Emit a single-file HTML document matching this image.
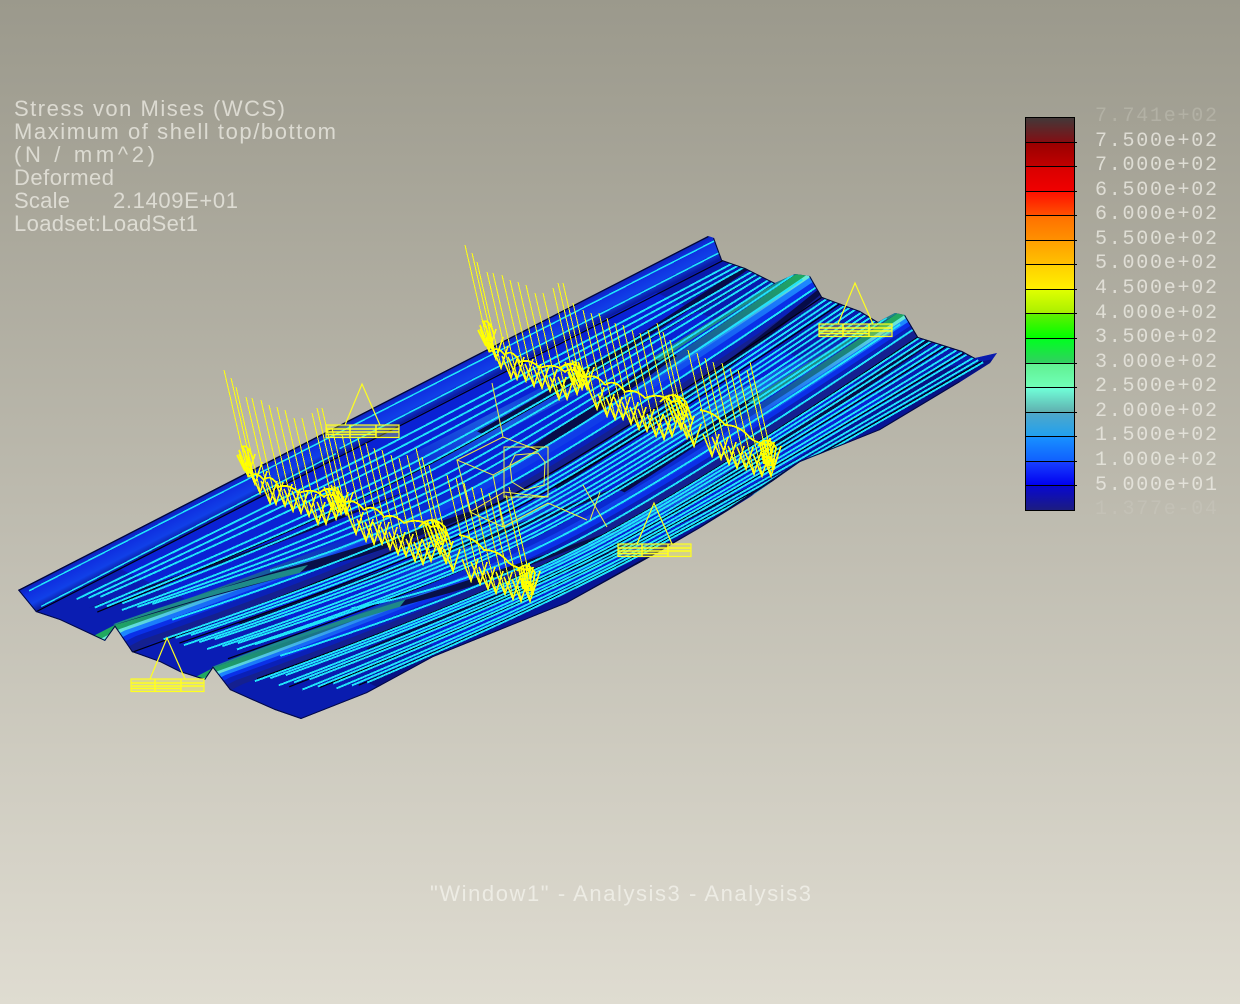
<!DOCTYPE html>
<html lang="en"><head><meta charset="utf-8"><title>Stress von Mises</title>
<style>
html,body{margin:0;padding:0;width:1240px;height:1004px;overflow:hidden}
svg{display:block}
.n{vector-effect:non-scaling-stroke;fill:none}
.t{font-family:"Liberation Sans",sans-serif;font-size:22px;fill:#ecebe3;fill-opacity:.78}
.m{font-family:"Liberation Mono",monospace;font-size:20px;fill:#ecebe3}
</style></head><body>
<svg width="1240" height="1004" viewBox="0 0 1240 1004" xmlns="http://www.w3.org/2000/svg">
<defs>
<linearGradient id="bg" x1="0" y1="0" x2="0" y2="1"><stop offset="0" stop-color="#9b998c"/><stop offset="1" stop-color="#dfdcd1"/></linearGradient>
<linearGradient id="bar" x1="0" y1="117" x2="0" y2="510" gradientUnits="userSpaceOnUse">
<stop offset="0" stop-color="#403a3a"/><stop offset=".062" stop-color="#801015"/><stop offset=".064" stop-color="#980000"/><stop offset=".125" stop-color="#c00000"/><stop offset=".127" stop-color="#d80000"/><stop offset=".188" stop-color="#f00000"/><stop offset=".19" stop-color="#ff1000"/><stop offset=".25" stop-color="#ff5000"/><stop offset=".252" stop-color="#ff7000"/><stop offset=".313" stop-color="#ff9000"/><stop offset=".315" stop-color="#ffa000"/><stop offset=".375" stop-color="#ffc000"/><stop offset=".377" stop-color="#ffd000"/><stop offset=".438" stop-color="#fff000"/><stop offset=".44" stop-color="#e0ff00"/><stop offset=".5" stop-color="#a8f000"/><stop offset=".502" stop-color="#60f000"/><stop offset=".562" stop-color="#00ff00"/><stop offset=".564" stop-color="#00ff20"/><stop offset=".625" stop-color="#30d060"/><stop offset=".627" stop-color="#60f090"/><stop offset=".688" stop-color="#70ffb8"/><stop offset=".69" stop-color="#70ffd8"/><stop offset=".75" stop-color="#60b0b0"/><stop offset=".752" stop-color="#50a8c8"/><stop offset=".813" stop-color="#20a0f0"/><stop offset=".815" stop-color="#1890ff"/><stop offset=".875" stop-color="#1060ff"/><stop offset=".877" stop-color="#1840ff"/><stop offset=".937" stop-color="#0000f0"/><stop offset=".939" stop-color="#0808d0"/><stop offset="1" stop-color="#1c1c80"/>
</linearGradient>
<linearGradient id="g1" x1="0" y1="0" x2="0" y2="1"><stop offset="0" stop-color="#050a40"/><stop offset=".12" stop-color="#0a1aa0"/><stop offset=".45" stop-color="#0f2fe0"/><stop offset=".75" stop-color="#1040e8"/><stop offset="1" stop-color="#0a1898"/></linearGradient>
<linearGradient id="hlG" gradientUnits="userSpaceOnUse" x1="0" y1="0" x2="1000" y2="0"><stop offset="0" stop-color="#20a860"/><stop offset=".16" stop-color="#1a6a90"/><stop offset=".3" stop-color="#0a2ad0"/><stop offset=".72" stop-color="#0a2ad0"/><stop offset=".86" stop-color="#1a6a90"/><stop offset="1" stop-color="#20a860"/></linearGradient>
<linearGradient id="hlC" gradientUnits="userSpaceOnUse" x1="0" y1="0" x2="1000" y2="0"><stop offset="0" stop-color="#68e8d8"/><stop offset=".18" stop-color="#2a90f0"/><stop offset=".35" stop-color="#1040e8"/><stop offset=".72" stop-color="#1040e8"/><stop offset=".86" stop-color="#2a90f0"/><stop offset="1" stop-color="#68e8d8"/></linearGradient>
<linearGradient id="hlB" gradientUnits="userSpaceOnUse" x1="0" y1="0" x2="1000" y2="0"><stop offset="0" stop-color="#1c88ff"/><stop offset=".3" stop-color="#0f3ce8"/><stop offset=".72" stop-color="#0f3ce8"/><stop offset="1" stop-color="#1c88ff"/></linearGradient>
<linearGradient id="glow" x1="0" y1="0" x2="1" y2="0"><stop offset="0" stop-color="#30a8f0" stop-opacity="0"/><stop offset=".5" stop-color="#30a8f0" stop-opacity=".8"/><stop offset="1" stop-color="#30a8f0" stop-opacity="0"/></linearGradient>
<clipPath id="cl"><path d="M18 590L708 236L714 238L722 260L745 268L775 283L795 274L810 276L822 297L860 311L878 322L895 313L905 315L918 337L962 351L975 358L997 353L990 363L960 382L880 430L800 462L750 497L700 528L650 557L567 603L433 657L367 693L301 719L275 710L250 699L230 690L213 668L205 680L180 672L160 662L132 652L115 627L105 641L60 620L36 612Z"/></clipPath>
<path id="cA" d="M-60 306L13 306Q300 450 450 450Q600 450 1010 303L1100 303" fill="none"/>
<path id="cB" d="M-60 648L16 648Q300 780 450 780Q600 780 1020 637L1100 637" fill="none"/>
<g id="a" fill="none" stroke="#ffff10"><path d="M0 0L24 104" stroke-width="1"/><path d="M15 84L24 106L31 84" stroke-width="1.6"/></g>
<g id="row">
<use href="#a" x="465" y="245"/><use href="#a" x="472" y="253"/><use href="#a" x="477" y="262"/><use href="#a" x="487" y="272"/><use href="#a" x="493" y="273"/><use href="#a" x="502" y="275"/><use href="#a" x="510" y="280"/><use href="#a" x="518" y="282"/><use href="#a" x="526" y="285"/><use href="#a" x="535" y="293"/><use href="#a" x="543" y="293"/><use href="#a" x="553" y="288"/><use href="#a" x="558" y="283"/><use href="#a" x="563" y="283"/><use href="#a" x="573" y="303"/><use href="#a" x="583" y="310"/><use href="#a" x="591" y="313"/><use href="#a" x="599" y="313"/><use href="#a" x="607" y="318"/><use href="#a" x="615" y="323"/><use href="#a" x="623" y="325"/><use href="#a" x="632" y="330"/><use href="#a" x="640" y="333"/><use href="#a" x="648" y="330"/><use href="#a" x="657" y="323"/><use href="#a" x="663" y="332"/><use href="#a" x="670" y="340"/><use href="#a" x="688" y="350"/><use href="#a" x="697" y="353"/><use href="#a" x="705" y="358"/><use href="#a" x="713" y="362"/><use href="#a" x="722" y="363"/><use href="#a" x="730" y="368"/><use href="#a" x="738" y="370"/><use href="#a" x="747" y="370"/><use href="#a" x="750" y="362"/>
<path d="M480 325L490 352M484 322L494 350M478 330L486 346M488 322L492 345M482 322Q490 318 494 335M486 326L490 348M490 352Q497 345 505 355Q512 348 520 362Q530 358 540 368Q555 362 565 372Q572 365 585 378Q595 372 605 385M560 368Q572 358 584 372L590 392M565 362L575 385M572 360L582 385M578 362L586 380M569 364L579 388M575 361L584 384M605 385Q615 378 625 392Q635 388 645 398Q660 392 672 402Q680 398 690 412M660 402Q672 388 686 402L692 420M665 396L675 422M672 394L682 420M678 396L688 418M668 396L678 420M675 394L685 418M700 410Q715 412 725 425Q740 425 750 438Q760 445 772 445M758 446Q768 434 776 448L772 470M764 440L768 468M770 438L772 466M760 444L764 464M774 442L770 462M767 440L770 466M762 442L766 466" fill="none" stroke="#ffff00" stroke-width="1.8"/>
</g>
<g id="ic" fill="none" stroke="#ffff20" stroke-width="1.2">
<path d="M19 0L36 -41L54 0"/>
<rect x="0" y="0" width="73" height="12.5" fill="#ffff30" fill-opacity=".3"/>
<path d="M0 4H73M0 7H73M0 9.5H50M24 0V12M50 0V12" stroke-width="1.5"/>
</g>
</defs>
<rect width="1240" height="1004" fill="url(#bg)"/>

<g clip-path="url(#cl)">
<rect width="1240" height="1004" fill="#0a22d4"/>
<g transform="matrix(.688 -.354 .281 .129 20 590)">
<!-- shading of flats -->
<rect x="880" y="100" width="260" height="1000" fill="#081488" opacity=".5"/>
<rect x="-60" y="110" width="160" height="230" fill="#0a1890" opacity=".5"/>
<rect x="-60" y="440" width="200" height="240" fill="#0a1890" opacity=".45"/>
<rect x="-60" y="760" width="260" height="280" fill="#0a1890" opacity=".55"/>
<path d="M100 990Q350 1020 450 1020Q600 1020 960 920L1100 1100L100 1100Z" fill="#050a60" opacity=".55"/>
<!-- soft glows -->
<rect x="220" y="55" width="440" height="50" fill="url(#glow)"/>
<rect x="430" y="240" width="300" height="90" fill="url(#glow)" opacity=".55"/>
<rect x="620" y="620" width="340" height="70" fill="url(#glow)" opacity=".7"/>
<rect x="300" y="860" width="420" height="60" fill="url(#glow)" opacity=".7"/>
<rect x="230" y="650" width="320" height="60" fill="url(#glow)" opacity=".4"/>
<!-- rib 1 -->
<rect x="-60" y="-40" width="1180" height="150" fill="url(#g1)"/>
<!-- rib A face -->
<g stroke-linecap="butt">
<use href="#cA" transform="translate(0 118)" stroke="#142090" stroke-width="34"/>
<use href="#cA" transform="translate(0 90)" stroke="#0a20b8" stroke-width="30"/>
<use href="#cA" transform="translate(0 68)" stroke="#0a30e8" stroke-width="24"/>
<use href="#cA" transform="translate(0 48)" stroke="url(#hlB)" stroke-width="22"/>
<use href="#cA" transform="translate(0 30)" stroke="url(#hlC)" stroke-width="18"/>
<use href="#cA" transform="translate(0 12)" stroke="url(#hlG)" stroke-width="24"/>
<!-- rib B face -->
<use href="#cB" transform="translate(0 100)" stroke="#142090" stroke-width="30"/>
<use href="#cB" transform="translate(0 76)" stroke="#0a20b8" stroke-width="24"/>
<use href="#cB" transform="translate(0 56)" stroke="#0a30e8" stroke-width="20"/>
<use href="#cB" transform="translate(0 40)" stroke="url(#hlB)" stroke-width="18"/>
<use href="#cB" transform="translate(0 25)" stroke="url(#hlC)" stroke-width="16"/>
<use href="#cB" transform="translate(0 10)" stroke="url(#hlG)" stroke-width="20"/>
</g>
<!-- dark lens wedges -->
<path d="M20 195Q100 240 190 289Q300 340 420 370Q300 318 180 272Q100 225 20 195Z" fill="#070c48"/>
<path d="M13 306Q150 400 282 518Q350 560 480 590Q350 520 240 440Q120 350 13 306Z" fill="#081048"/>
<path d="M16 648Q150 700 290 819Q380 880 520 910Q380 845 270 775Q150 690 16 648Z" fill="#081048"/>
<path d="M100 545Q250 610 400 700Q480 745 600 760Q480 715 390 670Q250 590 100 530Z" fill="#070c48"/>
<path d="M150 880Q300 920 450 985Q560 1010 700 1000Q560 985 450 960Q300 900 150 865Z" fill="#070c48"/>
<path d="M520 640Q700 600 1000 420L1000 400Q700 570 520 620Z" fill="#070c48"/>
<path d="M550 300Q750 290 1000 190L1000 170Q750 260 550 280Z" fill="#070c48"/>
<path d="M560 960Q760 900 1000 810L1000 785Q760 870 560 935Z" fill="#070c48"/>
<path d="M560 780Q640 760 800 700L800 665Q640 720 560 750Z" fill="#070c48"/>
<path d="M560 470Q640 450 800 380L800 345Q640 410 560 440Z" fill="#070c48"/>
<!-- teal backs -->
<path d="M13 306Q120 370 217 464L235 450Q130 350 13 300Z" fill="#1f8a88"/>
<path d="M16 648Q120 690 235 776L250 760Q130 680 16 642Z" fill="#1f8a88"/>
<path d="M1010 303Q900 325 780 365L780 340Q900 305 1010 296Z" fill="#1f8a88"/>
<path d="M1020 637Q900 665 780 705L780 680Q900 640 1020 630Z" fill="#1f8a88"/>
<!-- black lines -->
<path class="n" stroke="#000010" stroke-width="1.2" d="M-20 110L1010 118M20 226Q300 311 450 311Q600 311 1000 229M-20 437Q300 580 450 580Q600 580 1000 433M30 494Q300 634 450 634Q600 634 1000 492M40 642Q300 774 450 774Q600 774 1000 633M30 770Q300 896 450 896Q600 896 1000 762M40 860Q300 955 450 955Q600 955 1000 851M60 920Q300 993 450 993Q600 993 1000 910M90 985Q300 1034 450 1034Q600 1034 1000 973"/>
<!-- cyan lines -->
<g shape-rendering="crispEdges">
<path class="n" stroke="#1fe4fa" stroke-width="1.5" d="M5 20L1000 30M-10 100L420 96M430 84L1000 82"/>
<path class="n" stroke="#1fe4fa" stroke-width="1.9" d="M25 140Q300 162 450 162Q600 162 1000 145M35 158Q300 193 450 193Q600 193 1000 163M45 176Q300 225 450 225Q600 225 1000 180M25 205Q300 275 450 275Q600 275 1000 209M35 223Q300 306 450 306Q600 306 1000 227M50 241Q300 337 450 337Q600 337 1000 244M40 265Q300 379 450 379Q600 379 1000 268M55 283Q300 410 450 410Q600 410 1000 285M70 300Q300 440 450 440Q600 440 1000 302"/>
<path class="n" stroke="#1fe4fa" stroke-width="1.9" d="M200 400Q300 479 450 479Q600 479 1000 336M60 395Q300 533 450 533Q600 533 1000 390M25 450Q300 592 450 592Q600 592 1000 449M35 468Q300 609 450 609Q600 609 1000 467M50 486Q300 626 450 626Q600 626 1000 484M30 510Q300 649 450 649Q600 649 1000 508M45 528Q300 666 450 666Q600 666 1000 525M60 546Q300 683 450 683Q600 683 1000 543M40 568Q300 704 450 704Q600 704 1000 565M55 586Q300 721 450 721Q600 721 1000 582M70 604Q300 738 450 738Q600 738 1000 600M60 625Q300 758 450 758Q600 758 1000 620M80 640Q300 772 450 772Q600 772 1000 635"/>
<path class="n" stroke="#1fe4fa" stroke-width="1.9" d="M80 730Q300 866 450 866Q600 866 1000 728M200 690Q300 821 450 821Q600 821 1000 684M25 775Q300 900 450 900Q600 900 1000 767M40 793Q300 911 450 911Q600 911 1000 785M55 811Q300 923 450 923Q600 923 1000 803M35 835Q300 938 450 938Q600 938 1000 826M50 853Q300 950 450 950Q600 950 1000 844M65 871Q300 962 450 962Q600 962 1000 862M45 895Q300 977 450 977Q600 977 1000 885M60 913Q300 989 450 989Q600 989 1000 903M75 931Q300 1000 450 1000Q600 1000 1000 920M70 955Q300 1016 450 1016Q600 1016 1000 944M85 973Q300 1028 450 1028Q600 1028 1000 962M100 991Q300 1039 450 1039Q600 1039 1000 979"/>
</g>
</g>
<path d="M18 590L708 236" stroke="#040830" stroke-width="2.5" fill="none"/>
<path d="M714 238L722 260L745 268L775 283M810 276L822 297L860 311L878 322M905 315L918 337L962 351L975 358" stroke="#050a30" stroke-width="2" fill="none"/>
<path d="M18 590L36 612L60 620L105 641L115 627L132 652L160 662L180 672L205 680L213 668L230 690L250 699L275 710L301 719" stroke="#040a40" stroke-width="2" fill="none"/>
<path d="M433 657L367 693L301 719M960 382L880 430L800 462L700 528L567 603L433 657" stroke="#050a40" stroke-width="2" fill="none"/>
</g>

<g fill="none" stroke="#f0f040" stroke-width="1">
<path d="M492 383L503 437L457 460L493 475L538 450L503 437M457 460L470 512L503 527L548 503L587 520M493 475L503 527M504 447H548V497H504ZM515 455L538 453L545 462L544 485L525 490L512 482L510 465ZM548 497L504 492L470 512M583 485L607 527M600 492L590 520"/>
</g>
<g shape-rendering="crispEdges">
<use href="#row"/>
<use href="#row" transform="translate(-241 125)"/>
</g>
<use href="#ic" x="326" y="425"/>
<use href="#ic" x="131" y="679"/>
<use href="#ic" x="618" y="544"/>
<use href="#ic" x="819" y="324"/>

<rect x="1025.5" y="117.5" width="49" height="393" fill="url(#bar)" stroke="#000" stroke-width="1"/>
<path d="M1025 142.5H1077M1025 166.5H1077M1025 191.5H1077M1025 215.5H1077M1025 240.5H1077M1025 264.5H1077M1025 289.5H1077M1025 313.5H1077M1025 338.5H1077M1025 363.5H1077M1025 387.5H1077M1025 412.5H1077M1025 436.5H1077M1025 461.5H1077M1025 485.5H1077" stroke="#000" stroke-width="1"/>

<g>
<text class="t" x="14" y="116" textLength="271">Stress von Mises (WCS)</text>
<text class="t" x="14" y="139" textLength="322">Maximum of shell top/bottom</text>
<text class="t" x="14" y="162" textLength="141">(N / mm^2)</text>
<text class="t" x="14" y="185" textLength="100">Deformed</text>
<text class="t" x="14" y="208" textLength="56">Scale</text>
<text class="t" x="113" y="208" textLength="125">2.1409E+01</text>
<text class="t" x="14" y="231" textLength="184">Loadset:LoadSet1</text>
<text class="t" x="430" y="901" textLength="381" style="fill:#f4f3ec;fill-opacity:.75">"Window1" - Analysis3 - Analysis3</text>
</g>
<g>
<text class="m" x="1095" y="121" textLength="122" style="fill-opacity:.22">7.741e+02</text>
<text class="m" x="1095" y="146" textLength="122" style="fill-opacity:.8">7.500e+02</text>
<text class="m" x="1095" y="170" textLength="122" style="fill-opacity:.8">7.000e+02</text>
<text class="m" x="1095" y="195" textLength="122" style="fill-opacity:.8">6.500e+02</text>
<text class="m" x="1095" y="219" textLength="122" style="fill-opacity:.8">6.000e+02</text>
<text class="m" x="1095" y="244" textLength="122" style="fill-opacity:.8">5.500e+02</text>
<text class="m" x="1095" y="268" textLength="122" style="fill-opacity:.8">5.000e+02</text>
<text class="m" x="1095" y="293" textLength="122" style="fill-opacity:.8">4.500e+02</text>
<text class="m" x="1095" y="318" textLength="122" style="fill-opacity:.8">4.000e+02</text>
<text class="m" x="1095" y="342" textLength="122" style="fill-opacity:.8">3.500e+02</text>
<text class="m" x="1095" y="367" textLength="122" style="fill-opacity:.8">3.000e+02</text>
<text class="m" x="1095" y="391" textLength="122" style="fill-opacity:.8">2.500e+02</text>
<text class="m" x="1095" y="416" textLength="122" style="fill-opacity:.8">2.000e+02</text>
<text class="m" x="1095" y="440" textLength="122" style="fill-opacity:.8">1.500e+02</text>
<text class="m" x="1095" y="465" textLength="122" style="fill-opacity:.8">1.000e+02</text>
<text class="m" x="1095" y="490" textLength="122" style="fill-opacity:.8">5.000e+01</text>
<text class="m" x="1095" y="514" textLength="122" style="fill-opacity:.14">1.377e-04</text>
</g>
</svg>
</body></html>
